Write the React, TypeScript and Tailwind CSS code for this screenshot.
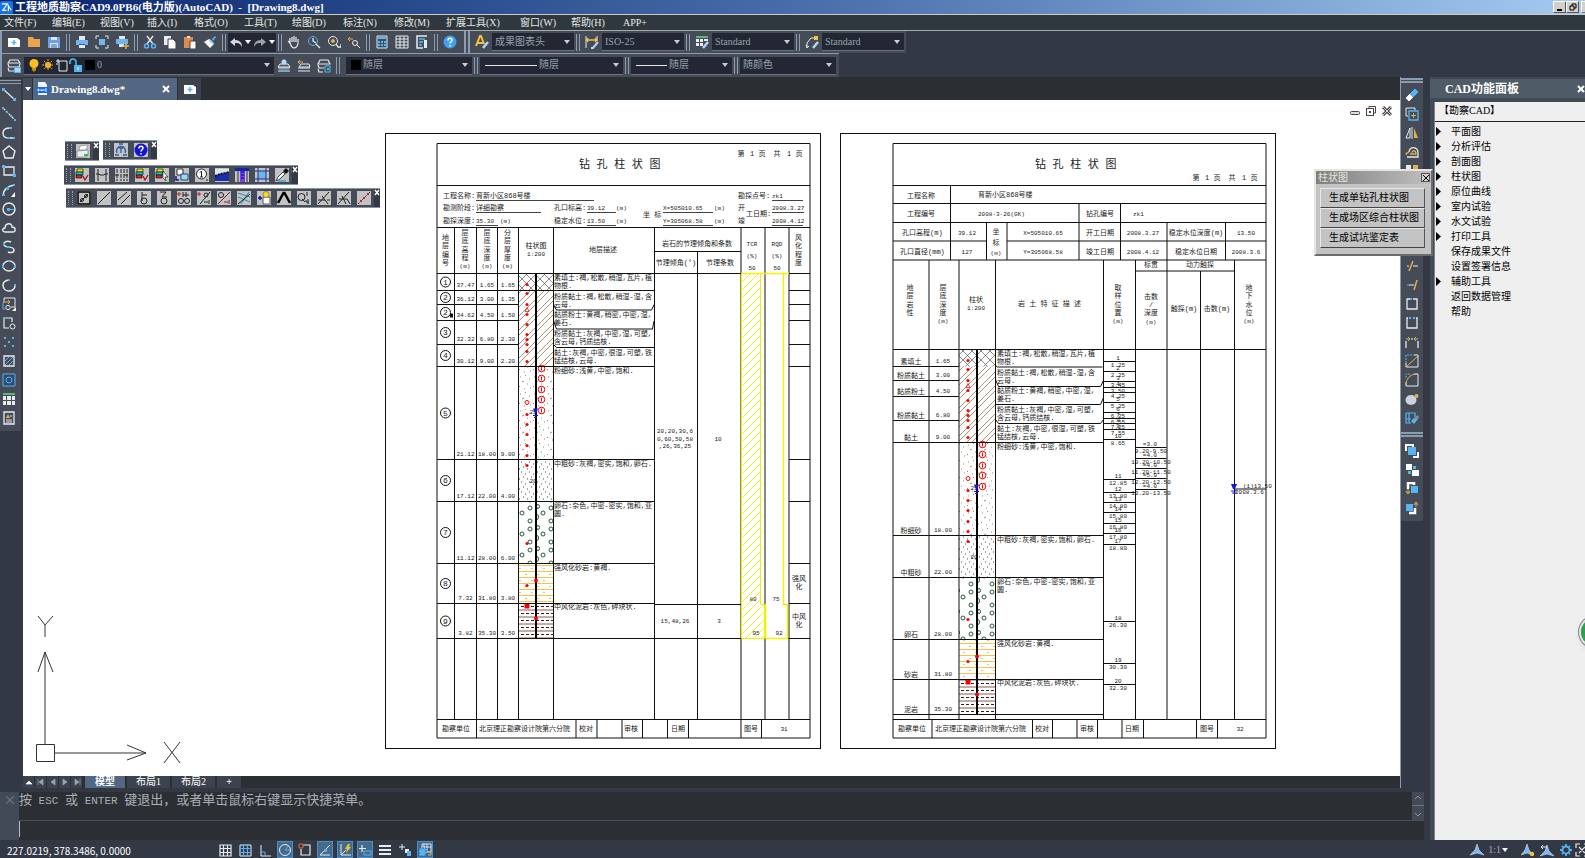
import { ReactNode } from "react";

const W = "#e8ebf0";
const B = "#56b4f2";
const O = "#e3b04b";
const K = "#222222";

/* ---------- icons, all on a 14x14 grid ---------- */

const icons: Record<string, ReactNode> = {
  newFile: (
    <>
      <path d="M1 3h9l3 2v7H1z" fill="#fff" />
      <path d="M7 5v5M4.500 7.500h5" stroke={B} strokeWidth="1.500" />
    </>
  ),
  open: <path d="M1 2h5l1 2h6v8H1z" fill="#e9a64c" />,
  save: (
    <>
      <path d="M1 2h12v11H1z" fill="#6f9ff0" />
      <path d="M4 2h6v3H4zM3 8h8v5H3z" fill="#dbe6fb" />
      <path d="M4 10h6M4 12h6" stroke="#3c5fa8" />
    </>
  ),
  print: (
    <>
      <path d="M4 1h6v4H4zM4 9h6v4H4z" fill="#dbe9f8" />
      <path d="M1 5h12v5H1z" fill="#74b4ea" />
      <path d="M4 9h6v1H4z" fill="#2f5f8f" />
    </>
  ),
  preview: (
    <>
      <path d="M1 4V1h3M10 1h3v3M13 10v3h-3M4 13H1v-3" fill="none" stroke={W} />
      <path d="M4 4h6v6H4z" fill="#74b4ea" />
    </>
  ),
  publish: (
    <>
      <path d="M4 1h6v3H4zM4 8h5v4H4z" fill="#dbe9f8" />
      <path d="M1 4h12v5H1z" fill="#74b4ea" />
      <path d="M11 8v6M8 11h6" stroke={O} strokeWidth="1.500" />
    </>
  ),
  cut: (
    <>
      <path d="M4 1l6 8M10 1L4 9" stroke={W} strokeWidth="1.300" />
      <circle cx="3.500" cy="11" r="2" fill="none" stroke={B} strokeWidth="1.500" />
      <circle cx="10.500" cy="11" r="2" fill="none" stroke={B} strokeWidth="1.500" />
    </>
  ),
  copy: (
    <>
      <path d="M1 1h7v9H1z" fill={W} />
      <path d="M5 4h5l3 3v7H5z" fill="#fff" stroke="#3a414d" />
    </>
  ),
  paste: (
    <>
      <path d="M1 2h9v11H1z" fill="#e08b4c" />
      <path d="M4 1h3v2H4z" fill={W} />
      <path d="M7 6h6v8H7z" fill="#fff" stroke="#3a414d" />
    </>
  ),
  brush: (
    <>
      <path d="M9 4l3-3 1 1-3 4z" fill={B} />
      <path d="M6 4l5 5-4 4-6-6z" fill="#fff" />
      <path d="M7 4l4 4-2 1-3-3z" fill="#9cc9f2" />
    </>
  ),
  undo: <path d="M6 3L1 7l5 4V8c3 0 5 0 7 4 0-4-2-7-7-7z" fill="#d5d9e0" />,
  redo: <path d="M8 3l5 4-5 4V8c-3 0-5 0-7 4 0-4 2-7 7-7z" fill="#9da4b0" />,
  hand: (
    <path
      d="M3 8L1 6M3 8V3M5 7V2M7 7V1M9 7V2M11 8V4M3 8c1 3 2 5 4 5s4-2 4-5"
      fill="none"
      stroke={W}
      strokeWidth="1.200"
    />
  ),
  zoomRt: (
    <>
      <circle cx="6" cy="6" r="4.500" fill="none" stroke={B} />
      <path d="M6 3v3l3 2M9 9l4 4" stroke={W} strokeWidth="1.300" fill="none" />
    </>
  ),
  zoomWin: (
    <>
      <circle cx="6" cy="6" r="4.500" fill="none" stroke={W} />
      <circle cx="6" cy="6" r="2" fill={O} />
      <path d="M9 9l2 3h3v-3" stroke={W} fill="none" strokeWidth="1.300" />
    </>
  ),
  zoomPrev: (
    <>
      <path d="M1 4h5M1 4l2-2M1 4l2 2" stroke={O} fill="none" />
      <circle cx="8" cy="8" r="2.500" fill="none" stroke={W} />
      <path d="M10 10l3 3" stroke={W} />
    </>
  ),
  calc: (
    <>
      <path d="M2 1h10v12H2z" fill="none" stroke={W} />
      <path d="M3 3h8" stroke={B} strokeWidth="2" />
      <path d="M4 6v7M7 6v7M10 6v7" stroke={B} strokeDasharray="2 1" strokeWidth="2" />
    </>
  ),
  table: <path d="M1 1h12v12H1zM5 1v12M9 1v12M1 4h12M1 7h12M1 10h12" fill="none" stroke={W} />,
  props: (
    <>
      <path d="M12 1H2v12h6" fill="none" stroke={W} strokeWidth="1.500" />
      <path d="M4 4h6M4 7h4M4 10h3" stroke={B} strokeWidth="1.500" />
      <path d="M9 5h3v8H9z" fill={W} />
    </>
  ),
  help: (
    <>
      <circle cx="7" cy="7" r="6.500" fill="#3fa2ee" />
      <path d="M5 5.500c0-3 4-3 4-.5C9 6.500 7 7 7 8.500M7 10v1.500" fill="none" stroke="#fff" strokeWidth="1.500" />
    </>
  ),
  textStyle: (
    <>
      <path d="M1 11L5 1h1l3 8M3 8h5" fill="none" stroke="#f3c33d" strokeWidth="2" />
      <path d="M8 13l5-6" stroke="#b8d4f2" strokeWidth="2.500" />
    </>
  ),
  dimStyle: (
    <>
      <path d="M1 1v12M12 1v5" stroke={W} />
      <path d="M2 5h9M3 3L1.500 5 3 7M10 3l2 2-2 2" stroke="#f3c33d" fill="none" strokeWidth="1.300" />
      <path d="M6 13h2l5-6" stroke="#b8d4f2" strokeWidth="2" fill="none" />
    </>
  ),
  tableStyle: (
    <>
      <path d="M1 1h12v2H1z" fill="#57b97c" />
      <path d="M1 4h3v3H1zM5 4h3v3H5zM9 4h4v2H9zM1 8h3v3H1zM5 8h3v3H5z" fill={W} />
      <path d="M8 13l5-6" stroke="#b8d4f2" strokeWidth="2.500" />
    </>
  ),
  leaderStyle: (
    <>
      <path d="M2 12V8l4-5h3M1 10l1 3 2-2" stroke={W} fill="none" />
      <path d="M9 1h4v4H9z" fill="#f3c33d" />
      <path d="M8 13l5-6" stroke="#b8d4f2" strokeWidth="2.500" />
    </>
  ),
  layers: (
    <>
      <path d="M3 1h8l2 3H1zM1 5l1 3h10l1-3M1 9l1 3h5" fill="none" stroke={W} strokeWidth="1.200" />
      <path d="M7 8h7v6H7z" fill={B} />
      <path d="M8 10h5M8 12h5" stroke="#fff" />
    </>
  ),
  layerOn: (
    <>
      <path d="M3 5h8l2 3H1zM1 9h12M1 12h12" fill="#4d5766" stroke={W} />
      <circle cx="7" cy="3" r="2.500" fill="#b9d9f4" />
      <path d="M2 11h10" stroke={B} />
    </>
  ),
  layerPrev: (
    <>
      <path d="M4 5h8l1 3H2zM1 9h12M1 12h12" fill="none" stroke={W} />
      <path d="M1 3h5M3 1L1 3l2 2" stroke={O} fill="none" />
    </>
  ),
  layerState: (
    <>
      <path d="M3 1h8l2 4H1zM1 6l1 3h5M1 10l1 3h4" fill="none" stroke={W} strokeWidth="1.200" />
      <path d="M8 7h5v6H8z" fill="none" stroke={B} />
      <path d="M10 9h2v2h-2z" fill={B} />
    </>
  ),
  bulb: (
    <>
      <circle cx="7" cy="5.500" r="4.500" fill="#fbbf24" />
      <path d="M5 10h4v2l-2 2-2-2z" fill="#c58a17" />
    </>
  ),
  sun: (
    <>
      <circle cx="7" cy="7" r="3" fill="#fbc02d" />
      <path d="M7 1v12M1 7h12M3 3l8 8M11 3l-8 8" stroke="#f5a623" strokeDasharray="2 1" />
    </>
  ),
  viewport: <path d="M4 3h8v10H4zM1 3h3M3 1v4M1 6h2" fill="none" stroke={W} />,
  lock: (
    <>
      <path d="M1 6V4c0-4 6-4 6 0v4" fill="none" stroke={B} strokeWidth="1.600" />
      <path d="M5 7h8v7H5z" fill={B} />
      <path d="M9 9v3" stroke="#fff" />
    </>
  ),
  line: (
    <>
      <path d="M1 1l11 10" stroke={W} strokeWidth="1.200" />
      <path d="M0 0h3v3H0zM11 10h3v3h-3z" fill={B} />
    </>
  ),
  xline: (
    <>
      <path d="M1 1l12 12" stroke={W} strokeWidth="1.200" strokeDasharray="3 1" />
      <path d="M0 0h2v2H0zM4 4h2v2H4zM8 8h2v2H8zM12 12h2v2h-2z" fill={B} />
    </>
  ),
  pline: (
    <>
      <path d="M8 2C3 2 1 4 1 7s2 5 5 5h6" fill="none" stroke={W} strokeWidth="1.400" />
      <path d="M7 1h3v2H7zM5 11h3v2H5zM11 11h2v2h-2z" fill={B} />
    </>
  ),
  polygon: <path d="M7 1l6 5-2 7H3L1 6z" fill="none" stroke={W} strokeWidth="1.400" />,
  rect: (
    <>
      <path d="M2 3h10v8H2z" fill="none" stroke={W} strokeWidth="1.300" />
      <path d="M0 1h3v3H0zM11 10h3v3h-3z" fill={B} />
    </>
  ),
  arc: (
    <>
      <path d="M1 12C1 8 5 3 12 2" fill="none" stroke={W} strokeWidth="1.500" />
      <path d="M0 11h3v2H0zM4 4h3v3H4zM11 1h2v2h-2z" fill={B} />
      <path d="M13 9v5H9z" fill="#fff" />
    </>
  ),
  circle: (
    <>
      <circle cx="7" cy="7" r="6" fill="none" stroke={W} strokeWidth="1.400" />
      <path d="M5 6h3v3H5zM8 7h4v1H8z" fill={B} />
    </>
  ),
  cloud: (
    <path d="M3 11c-3 0-3-4 0-4 0-5 7-6 7-1 4 0 4 5 1 5z" fill="none" stroke={W} strokeWidth="1.400" />
  ),
  spline: (
    <>
      <path d="M9 2C4 0 0 3 3 6c2 2 9 0 9 4 0 3-4 3-6 2" fill="none" stroke={W} strokeWidth="1.500" />
      <path d="M5 6h3v2H5zM1 3h2v2H1z" fill={B} />
    </>
  ),
  ellipse: (
    <>
      <ellipse cx="7" cy="7" rx="6" ry="5" fill="none" stroke={W} strokeWidth="1.400" />
      <path d="M0 6h2v3H0zM12 6h2v3h-2zM6 1h2v2H6z" fill={B} />
    </>
  ),
  earc: (
    <>
      <path d="M7 2C3 2 1 5 1 7c0 4 3 6 6 6s6-2 6-5" fill="none" stroke={W} strokeWidth="1.500" />
      <path d="M6 1h2v2H6zM12 6h2v2h-2z" fill={B} />
    </>
  ),
  insert: (
    <>
      <path d="M2 6V1h11v9H9" fill="none" stroke={W} />
      <path d="M3 5h5M6 3l2 2-2 2" stroke={O} fill="none" />
      <path d="M1 6v6h2" stroke={B} fill="none" />
      <circle cx="6" cy="10.500" r="2.200" stroke={W} fill="none" />
      <path d="M14 10v4h-4z" fill="#fff" />
    </>
  ),
  block: (
    <>
      <path d="M10 6V2H2v10h5" fill="none" stroke={W} strokeWidth="1.200" />
      <circle cx="10.500" cy="10.500" r="2.500" fill="none" stroke={W} />
      <path d="M1 1h2v2H1z" fill={B} />
    </>
  ),
  point: <path d="M2 2h2v2H2zM10 2h2v2h-2zM6 6h2v2H6zM2 10h2v2H2zM10 10h2v2h-2z" fill={B} />,
  hatch: (
    <>
      <path d="M2 2h10v10H2z" fill="none" stroke={W} strokeWidth="1.300" />
      <path d="M3 7l4-4M3 11l8-8M7 11l4-4" stroke={B} />
    </>
  ),
  region: (
    <>
      <path d="M1 1h12v12H1z" fill="#2f4a6b" stroke={B} />
      <circle cx="7" cy="7" r="3" fill="none" stroke={B} />
    </>
  ),
  tbl: (
    <>
      <path d="M1 1h12v2H1z" fill="#57b97c" />
      <path d="M1 4h3v4H1zM5 4h4v4H5zM10 4h3v4h-3zM1 9h3v4H1zM5 9h4v4H5zM10 9h3v4h-3z" fill={W} />
    </>
  ),
  mtext: (
    <>
      <path d="M2 1h10v12H2z" fill="none" stroke={W} strokeWidth="1.300" />
      <path d="M4 7l2-4 2 4z" fill={O} />
      <path d="M8 5h2M4 9h6M4 11h6" stroke={W} />
    </>
  ),
  eraser: (
    <>
      <path d="M1 10l3 3 4-4-3-3z" fill="#fff" stroke="#fff" strokeLinejoin="round" />
      <path d="M5 6l5-5 3 3-5 5z" fill={B} stroke={B} strokeLinejoin="round" />
    </>
  ),
  dup: (
    <>
      <path d="M3 9H1V1h9v2" fill="none" stroke={W} />
      <path d="M4 4h9v9H4z" fill="none" stroke={B} strokeWidth="1.300" />
      <path d="M8.500 6v5M6 8.500h5" stroke={O} />
    </>
  ),
  mirror: (
    <>
      <path d="M5 2v10H1z" fill="none" stroke={W} />
      <path d="M9 2l4 10H9z" fill={O} />
      <path d="M7 1v12" stroke={W} />
    </>
  ),
  offset: (
    <>
      <path d="M2 12h11V8c0-7-9-7-9-1" fill="none" stroke={W} strokeWidth="1.300" />
      <path d="M1 10c0-2 2-3 3-2M5 9h6c0-4-4-4-4-1" stroke={O} fill="none" strokeWidth="1.300" />
    </>
  ),
  array: (
    <>
      <path d="M1 1h5v5H1zM1 8h5v5H1zM8 8h5v5H8z" fill={W} />
      <path d="M8 1h5v5H8z" fill={O} />
    </>
  ),
  move: <path d="M7 1v12M1 7h12" stroke={W} />,
  trim: (
    <>
      <path d="M2 7h2M8 7h5" stroke={W} />
      <path d="M4 12L8 2" stroke={O} strokeWidth="1.500" />
    </>
  ),
  extend: (
    <>
      <path d="M2 7h2" stroke={B} />
      <path d="M4 7h5" stroke={W} />
      <path d="M9 12l3-10" stroke={O} strokeWidth="1.500" />
    </>
  ),
  breakPt: (
    <>
      <path d="M5 2H2v10h10V2H8" fill="none" stroke={W} strokeWidth="1.300" />
      <path d="M5 1h2v2H5z" fill={B} />
    </>
  ),
  breakTwo: (
    <>
      <path d="M3 2H2v10h10V2h-1" fill="none" stroke={W} strokeWidth="1.300" />
      <path d="M4 1h2v2H4zM8 1h2v2H8z" fill={B} />
    </>
  ),
  join: (
    <>
      <path d="M1 13V6M13 13V6" stroke={W} strokeWidth="1.300" />
      <path d="M1 4h4M3 2l2 2-2 2M13 4H9M11 2L9 4l2 2" stroke={O} fill="none" />
      <path d="M6 3h2v2H6z" fill={B} />
    </>
  ),
  chamfer: (
    <>
      <path d="M1 9v4h12V1H9" fill="none" stroke={W} />
      <path d="M1 9V1h8" fill="none" stroke={B} strokeDasharray="2 1" />
      <path d="M2 12L13 2" stroke={O} />
    </>
  ),
  fillet: (
    <>
      <path d="M1 9v4h12V1H9" fill="none" stroke={W} />
      <path d="M1 5V1h5" fill="none" stroke={B} strokeDasharray="2 1" />
      <path d="M1 12C1 6 5 1 12 1" stroke={O} fill="none" />
    </>
  ),
  explode: (
    <>
      <ellipse cx="6" cy="8" rx="5.500" ry="5" fill="#ccd3de" />
      <circle cx="11.500" cy="4" r="2" fill={O} />
    </>
  ),
  blockEdit: (
    <>
      <path d="M1 2h9v4M1 2v10h5M4 2v10M1 8h5" fill="none" stroke={B} strokeWidth="1.200" />
      <path d="M6 10l3-3 4 1-4 5z" fill={B} />
      <path d="M9 7l4-3 1 3-2 1z" fill="#8a909c" />
    </>
  ),
  front: (
    <>
      <path d="M1 7V1h7v2M13 8v5H8" fill="none" stroke="#fff" strokeWidth="2" />
      <path d="M3 3h8v8H3z" fill={B} />
    </>
  ),
  back: (
    <>
      <path d="M8 3h3v3H8zM3 8h3v3H3z" fill={B} />
      <path d="M1 1h6v6H1zM7 7h7v6H7z" fill="#fff" />
    </>
  ),
  above: (
    <>
      <path d="M3 7V1h6v2" fill="none" stroke="#fff" strokeWidth="2.500" />
      <path d="M6 4h7v7H6z" fill={B} />
      <path d="M1 9l2 3 2-3M3 7v5" stroke={O} fill="none" />
    </>
  ),
  under: (
    <>
      <path d="M10 7v5H4" fill="none" stroke="#fff" strokeWidth="2.500" />
      <path d="M1 3h7v7H1z" fill={B} />
      <path d="M9 4l2-3 2 3M11 1v5" stroke={O} fill="none" />
    </>
  ),
  // status bar
  grid: <path d="M2 2h11v11H2zM5.500 2v11M9.500 2v11M2 5.500h11M2 9.500h11" fill="none" stroke={W} strokeWidth="1.200" />,
  snap: (
    <>
      <path d="M2 2h11v11H2z" fill="none" stroke={W} />
      <path d="M5.500 1v12M9.500 1v12M1 5.500h12M1 9.500h12" stroke={B} strokeWidth="1.200" />
    </>
  ),
  ortho: (
    <>
      <path d="M3 2v11h10" fill="none" stroke={W} />
      <path d="M3 9h4v4" fill="none" stroke={B} />
    </>
  ),
  polar: (
    <>
      <circle cx="7" cy="7" r="5.500" fill="none" stroke={W} />
      <path d="M7 7h5M7 7l3-4" stroke={B} />
    </>
  ),
  osnap: (
    <>
      <path d="M5 2h7v10H3V6" fill="none" stroke={W} strokeWidth="1.200" />
      <path d="M1 1h4v4H1z" fill="none" stroke="#d96c3a" />
    </>
  ),
  track: (
    <>
      <path d="M2 12L12 2M2 12h10" stroke={W} />
      <path d="M6 6h3v3H6z" fill={B} />
    </>
  ),
  ducs: (
    <>
      <path d="M3 1v11h10M3 12l5-5" stroke={W} fill="none" />
      <path d="M10 1L7 6h2L8 10l5-6h-2l1-3z" fill="#f3c33d" />
    </>
  ),
  dyn: (
    <>
      <path d="M4 2v7M1 5.500h7" stroke={W} strokeWidth="1.200" />
      <path d="M6 8h7v4H6z" fill="none" stroke={B} />
    </>
  ),
  lwt: <path d="M1 3h12M1 7h12M1 11h12" stroke={W} strokeWidth="2" />,
  cycle: (
    <>
      <path d="M4 1v6M1 4h6" stroke={W} />
      <path d="M7 6h4v4H7z" fill={W} />
      <path d="M9 8h4v5H9z" fill={B} />
    </>
  ),
  quick: (
    <>
      <path d="M4 1h9v8H4z" fill="#2f5f8f" stroke={W} />
      <path d="M6 1v8M9 1v8M4 4h9" stroke={W} />
      <path d="M1 5h7v8H1z" fill={B} stroke="#2f5f8f" strokeDasharray="2 1" />
      <path d="M13 8v4h-3" stroke={O} fill="none" />
    </>
  ),
  scale: <path d="M7 1l2 6 5 5-7-2-7 2 5-5z" fill="#7fb6f0" stroke="#c7dcf6" strokeWidth=".6" />,
  scaleDot: (
    <>
      <path d="M6 1l2 6 4 5-6-2-6 2 4-5z" fill="#7fb6f0" stroke="#c7dcf6" strokeWidth=".6" />
      <circle cx="11" cy="11" r="2.200" fill="#f3c33d" />
    </>
  ),
  scaleAuto: (
    <>
      <path d="M7 2l2 6 5 5-7-2-7 2 5-5z" fill="#7fb6f0" stroke="#c7dcf6" strokeWidth=".6" />
      <path d="M1 4h6M3 2L1 4l2 2" stroke={W} fill="none" />
    </>
  ),
  gear: (
    <>
      <circle cx="7" cy="7" r="3.500" fill="none" stroke={B} strokeWidth="1.800" />
      <path d="M7 1v2M7 11v2M1 7h2M11 7h2M3 3l1 1M10 10l1 1M11 3l-1 1M4 10l-1 1" stroke={B} strokeWidth="1.800" />
    </>
  ),
  full: <path d="M1 5V1h4M9 1h4v4M13 9v4H9M5 13H1V9M4 4l6 6M10 4l-6 6" fill="none" stroke={W} strokeWidth="1.200" />,
  // floating palettes
  printer: (
    <>
      <path d="M4 2l8-1-2 5H3z" fill="#fff" stroke="#777" strokeWidth=".6" />
      <path d="M1 7l11-1v5l-2 2H1z" fill="#e9eef2" stroke="#667" strokeWidth=".6" />
      <path d="M8 10h4v2H8z" fill="#2fc04a" />
    </>
  ),
  timer: (
    <>
      <path d="M3 10a4.500 4.500 0 1 1 8 0" fill="none" stroke="#2f5fa8" strokeWidth="1.400" />
      <path d="M5 5h4M7 5v5M5 1h4M1 12h4M9 12h4" stroke="#2f5fa8" strokeWidth="1.300" />
    </>
  ),
  about: (
    <>
      <circle cx="7" cy="7" r="6.500" fill="#1414d8" />
      <path d="M5 5.500c0-3 4-3 4-.5C9 6.500 7 7 7 8.500M7 10v1.500" fill="none" stroke="#fff" strokeWidth="1.500" />
    </>
  ),
  flag: (
    <>
      <path d="M2 1h6v3H2z" fill="#ffe100" stroke="#000" strokeWidth=".6" />
      <path d="M1 4h7v3H1z" fill="#0cc" stroke="#000" strokeWidth=".6" />
      <path d="M1 7h6v3H1z" fill="#d22" stroke="#000" strokeWidth=".6" />
      <path d="M8 8l2 4 3-5" fill="none" stroke="#a01024" strokeWidth="1.300" />
    </>
  ),
  flagCur: (
    <>
      <path d="M2 1h6v3H2z" fill="#ffe100" stroke="#000" strokeWidth=".6" />
      <path d="M1 4h7v3H1z" fill="#0cc" stroke="#000" strokeWidth=".6" />
      <path d="M1 7h6v3H1z" fill="#d22" stroke="#000" strokeWidth=".6" />
      <path d="M8 3l5 6-3 0 1 4-3-3z" fill="#fff" stroke="#000" strokeWidth=".6" />
    </>
  ),
  joinH: <path d="M3 1v12M11 1v12M1 6h3l1 1h4l1-1h3" fill="none" stroke={K} />,
  joinHH: <path d="M2 1v12M6 1v12M9 1v12M12 1v12M0 7h5M9 7h5" fill="none" stroke={K} strokeDasharray="4 1" />,
  docs: (
    <>
      <path d="M2 1h6v6H2z" fill="#fff" stroke="#000" strokeWidth=".8" />
      <path d="M6 6h7v6H6z" fill="#9fdbe6" stroke="#1f3f8f" />
      <path d="M1 8v4h3" stroke="#11a" fill="none" strokeWidth="1.500" />
    </>
  ),
  one: (
    <>
      <circle cx="6.500" cy="6" r="5" fill="#fff" stroke={K} />
      <path d="M5 4.500L6.500 3v6M5 9h3M11 12h2" stroke={K} fill="none" />
    </>
  ),
  section: (
    <>
      <path d="M0 1h14v12H0z" fill="#dfe6ee" />
      <path d="M0 8l5-2 5-1 4-1v9H0z" fill="#1a2fb0" />
      <path d="M0 8l5-2 5-1 4-1" stroke="#111" strokeWidth="2" fill="none" strokeDasharray="2 1" />
    </>
  ),
  column: (
    <>
      <path d="M0 0h14v3H0z" fill="#1525a8" />
      <path d="M5 3h5v11H5z" fill="#7d3cf0" />
      <path d="M6 4h3M6 7h3M6 10h3" stroke="#1525a8" strokeWidth="1.500" />
      <path d="M3 3v11M12 3v11" stroke="#333" />
    </>
  ),
  crop: (
    <>
      <path d="M3 3h8v8H3z" fill="#6db6ea" />
      <path d="M3 0v14M0 11h14M0 3h14M11 0v14" stroke="#1d2f8f" />
    </>
  ),
  dropper: (
    <>
      <path d="M1 13l2-4 5-5 2 2-5 5z" fill="#fff" stroke="#222" strokeWidth=".8" />
      <path d="M8 3l3-3 3 3-3 3z" fill="#111" />
      <path d="M3 13h8" stroke="#2aa9e6" strokeWidth="1.500" />
    </>
  ),
  p1: (
    <>
      <path d="M1 13V1h12v12z" fill="none" stroke="#000" strokeWidth="1.500" />
      <path d="M3 11l8-8" stroke={K} />
      <circle cx="5" cy="9" r="1.500" fill="none" stroke={K} />
      <circle cx="9" cy="5" r="1.500" fill="none" stroke={K} />
    </>
  ),
  p2: <path d="M1 13L13 1" stroke={K} />,
  p3: <path d="M1 9l9-8M4 13l9-9" stroke={K} />,
  p4: (
    <>
      <circle cx="7" cy="10" r="3" fill="none" stroke={K} />
      <path d="M5 1v9M5 4h5" stroke={K} />
    </>
  ),
  p5: (
    <>
      <circle cx="7" cy="10" r="3" fill="none" stroke={K} />
      <path d="M3 1h6L5 6h5" stroke={K} fill="none" />
    </>
  ),
  p6: (
    <>
      <circle cx="4" cy="10" r="2.500" fill="none" stroke={K} />
      <circle cx="10" cy="10" r="2.500" fill="none" stroke={K} />
      <path d="M6 1v5M9 1v5M6 4h6" stroke={K} />
      <path d="M0 3h4M2 1v4" stroke="#c02030" />
    </>
  ),
  p7: (
    <>
      <path d="M3 13L13 1M7 11h4M12 9v4" stroke={K} />
      <circle cx="9" cy="4" r="2" fill="none" stroke={K} />
      <path d="M0 3h4M2 1v4" stroke="#c02030" />
    </>
  ),
  p8: (
    <>
      <path d="M1 13L13 1M7 11h4M12 9v4" stroke="#822" />
      <circle cx="4" cy="4" r="2.500" fill="none" stroke={K} />
    </>
  ),
  p9: (
    <>
      <path d="M1 2l12 4M1 6l12 5M4 13l8-12" stroke="#2a8fc0" />
      <path d="M1 13L13 3" stroke={K} />
    </>
  ),
  p10: (
    <>
      <path d="M1 7h4M3 5v4" stroke="#11a" strokeWidth="1.500" />
      <path d="M6 6h7v7H6z" fill="#fff" stroke="#555" />
      <circle cx="9" cy="3.500" r="3" fill="#ffe100" stroke="#555" strokeWidth=".6" />
    </>
  ),
  p11: <path d="M7 1L1 12M7 1l6 11" stroke="#000" strokeWidth="2.500" fill="none" />,
  p12: (
    <>
      <circle cx="4.500" cy="6" r="3.500" fill="none" stroke={K} />
      <path d="M5 8l3 3M10 1v4M9 9v2h3M11 8v5" stroke={K} fill="none" />
    </>
  ),
  p13: <path d="M1 13L12 1M1 9h7M5 5l6 8M10 9h3" stroke={K} />,
  p14: <path d="M1 13L12 1M2 8h8l3 5M5 5l4 8" stroke={K} fill="none" />,
  p15: (
    <>
      <path d="M1 13L13 1" stroke={K} strokeDasharray="2 1" />
      <path d="M3 9h2v2H3zM6 6h2v2H6zM10 2h2v2h-2z" fill="#c02030" />
    </>
  ),
};

const Icon = ({ name }: { name: string }) => (
  <svg viewBox="0 0 14 14" className="size-3.5 shrink-0">
    {icons[name]}
  </svg>
);

const ToolButton = ({ name }: { name: string }) => (
  <button aria-label={name} className="flex h-full w-5 shrink-0 items-center justify-center">
    <Icon name={name} />
  </button>
);

const Grip = () => <span className="mx-[2px] h-[17px] w-1 shrink-0 self-center border-x border-[#8b9bb0]" />;

const Down = ({ color = "#c9cdd4" }: { color?: string }) => (
  <svg viewBox="0 0 6 4" className="h-1 w-1.5 shrink-0">
    <path d="M0 0h6L3 4z" fill={color} />
  </svg>
);

interface ComboProps {
  label: string;
  value: string;
  className: string;
  children?: ReactNode;
}

const Combo = ({ label, value, className, children }: ComboProps) => (
  <div className={`flex h-[18px] shrink-0 items-center self-center border-b border-[#6b7280] bg-[#222733] pr-1 pl-[3px] ${className}`}>
    {children}
    <select aria-label={label} className="min-w-0 flex-1 appearance-none bg-transparent text-[10px] leading-4 text-[#9aa1ad] outline-none">
      <option>{value}</option>
    </select>
    <Down />
  </div>
);

const menus = [
  ["文件(F)", "w-12"],
  ["编辑(E)", "w-12"],
  ["视图(V)", "w-[47px]"],
  ["插入(I)", "w-[47px]"],
  ["格式(O)", "w-[50px]"],
  ["工具(T)", "w-12"],
  ["绘图(D)", "w-[51px]"],
  ["标注(N)", "w-[51px]"],
  ["修改(M)", "w-[52px]"],
  ["扩展工具(X)", "w-[74px]"],
  ["窗口(W)", "w-[51px]"],
  ["帮助(H)", "w-[52px]"],
  ["APP+", "w-[52px]"],
];

const drawTools = [
  "line", "xline", "pline", "polygon", "rect", "arc", "circle", "cloud", "spline",
  "ellipse", "earc", "insert", "block", "point", "hatch", "region", "tbl", "mtext",
];

const modifyTools = [
  "eraser", "dup", "mirror", "offset", "array", "move", "move", "move", "move",
  "trim", "extend", "breakPt", "breakTwo", "join", "chamfer", "fillet", "explode", "blockEdit",
];

const panelItems: [string, boolean][] = [
  ["平面图", true],
  ["分析评估", true],
  ["剖面图", true],
  ["柱状图", true],
  ["原位曲线", true],
  ["室内试验", true],
  ["水文试验", true],
  ["打印工具", true],
  ["保存成果文件", false],
  ["设置签署信息", false],
  ["辅助工具", true],
  ["返回数据管理", false],
  ["帮助", false],
];

/* ---------- borehole log drawings ---------- */

interface TProps {
  x: number;
  y: number;
  children: ReactNode;
  mid?: boolean;
  size?: number;
}

const T = ({ x, y, children, mid, size = 7 }: TProps) => (
  <text x={x} y={y} fontSize={size} fill="#1a1a1a" textAnchor={mid ? "middle" : "start"} dominantBaseline="central">
    {children}
  </text>
);

// label written one glyph per row
const V = ({ x, y, s, unit }: { x: number; y: number; s: string; unit?: boolean }) => (
  <>
    {[...s.split(""), ...(unit ? ["(m)"] : [])].map((c, i) => (
      <T key={i} x={x} y={y + i * 8.3} mid size={c === "(m)" ? 6 : 7}>
        {c}
      </T>
    ))}
  </>
);

const PageNo = ({ x, y }: { x: number; y: number }) => (
  <>
    {[["第", 0], ["1", 11], ["页", 21], ["共", 36], ["1", 48], ["页", 58]].map(([c, dx], i) => (
      <T key={i} x={x + Number(dx)} y={y} mid>
        {c}
      </T>
    ))}
  </>
);

// top and bottom are offsets from the ground line
const layers = [
  { no: "1", name: "素填土", level: "37.47", depth: "1.65", thick: "1.65", top: 0, bottom: 17, fill: "cross" },
  { no: "2", name: "粉质黏土", level: "36.12", depth: "3.00", thick: "1.35", top: 17, bottom: 31, fill: "slash" },
  { no: "2", name: "黏质粉土", level: "34.62", depth: "4.50", thick: "1.50", top: 31, bottom: 47, fill: "slash" },
  { no: "3", name: "粉质黏土", level: "32.32", depth: "6.80", thick: "2.30", top: 47, bottom: 71, fill: "slash" },
  { no: "4", name: "黏土", level: "30.12", depth: "9.00", thick: "2.20", top: 71, bottom: 93, fill: "slash" },
  { no: "5", name: "粉细砂", level: "21.12", depth: "18.00", thick: "9.00", top: 93, bottom: 186, fill: "silt" },
  { no: "6", name: "中粗砂", level: "17.12", depth: "22.00", thick: "4.00", top: 186, bottom: 228, fill: "sand" },
  { no: "7", name: "卵石", level: "11.12", depth: "28.00", thick: "6.00", top: 228, bottom: 290, fill: "gravel" },
  { no: "8", name: "砂岩", level: "7.32", depth: "31.80", thick: "3.80", top: 290, bottom: 330, fill: "stone" },
  { no: "9", name: "泥岩", level: "3.82", depth: "35.30", thick: "3.50", top: 330, bottom: 365, fill: "mud" },
];

const descriptions: [number, string][] = [
  [4, "素填土:褐,松散,稍湿,瓦片,植"],
  [12, "物根."],
  [23, "粉质黏土:褐,松散,稍湿-湿,含"],
  [31, "云母."],
  [41, "黏质粉土:黄褐,稍密,中密,湿,"],
  [49, "姜石."],
  [60, "粉质黏土:灰褐,中密,湿,可塑,"],
  [68, "含云母,钙质结核."],
  [79, "黏土:灰褐,中密,很湿,可塑,铁"],
  [87, "锰结核,云母."],
  [97, "粉细砂:浅黄,中密,饱和."],
  [190, "中粗砂:灰褐,密实,饱和,卵石."],
  [232, "卵石:杂色,中密-密实,饱和,亚"],
  [240, "圆."],
  [294, "强风化砂岩:黄褐."],
  [333, "中风化泥岩:灰色,碎块状."],
];

const Patterns = ({ id }: { id: string }) => (
  <defs>
    <pattern id={`${id}-cross`} width="9" height="9" patternUnits="userSpaceOnUse">
      <path d="M0 0l9 9M9 0L0 9" stroke="#555" strokeWidth=".7" />
    </pattern>
    <pattern id={`${id}-slash`} width="14" height="14" patternUnits="userSpaceOnUse">
      <path d="M0 14L14 0M0 9L9 0M9 14l5-5" stroke="#85683a" strokeWidth=".7" />
    </pattern>
    <pattern id={`${id}-silt`} width="14" height="17" patternUnits="userSpaceOnUse">
      <path d="M2 3h1M7 1l1 1M11 5h1M4 8l2-1M9 10h1M1 13l1-1M12 14h1M6 15h1" stroke="#8a8760" strokeWidth=".9" />
    </pattern>
    <pattern id={`${id}-sand`} width="8" height="10" patternUnits="userSpaceOnUse">
      <path d="M1 2h1M5 4h1M3 7h1M7 9h1" stroke="#444" />
    </pattern>
    <pattern id={`${id}-gravel`} width="21" height="21" patternUnits="userSpaceOnUse">
      <g fill="none" stroke="#1f5b3c">
        <circle cx="5" cy="4" r="2" />
        <ellipse cx="13" cy="2.500" rx="1.500" ry="2" />
        <ellipse cx="12" cy="13" rx="1.500" ry="2.500" />
        <circle cx="5" cy="17" r="2" />
        <circle cx="18" cy="9" r="2" />
      </g>
    </pattern>
    <pattern id={`${id}-stone`} width="12" height="12" patternUnits="userSpaceOnUse">
      <path d="M0 1.500h12M0 7.500h12" stroke="#f6c44e" />
      <path d="M3 4.500h2M9 10.500h2" stroke="#f6c44e" />
    </pattern>
    <pattern id={`${id}-mud`} width="10" height="7" patternUnits="userSpaceOnUse">
      <path d="M0 1h10" stroke="#8a5a52" />
      <path d="M1 4.500h3M6 4.500h3" stroke="#3d1a14" />
    </pattern>
    <pattern id={`${id}-core`} width="8" height="8" patternUnits="userSpaceOnUse">
      <path d="M0 8L8 0M-2 2l4-4M6 10l4-4" stroke="#f5f000" strokeWidth=".9" />
    </pattern>
  </defs>
);

const dotsY = [11, 20, 31, 41, 51, 61, 66, 71, 78, 88, 141, 151, 161, 172, 182, 192, 270, 312];

const SoilStrip = ({ id, left, right, cx, top }: { id: string; left: number; right: number; cx: number; top: number }) => (
  <g>
    {layers.map((l, i) => (
      <rect key={i} x={left} y={top + l.top} width={right - left} height={l.bottom - l.top} fill={`url(#${id}-${l.fill})`} />
    ))}
    <path d={`M${cx} ${top}v365`} stroke="#000" strokeWidth="2" />
    {dotsY.map((y) => (
      <circle key={y} cx={cx - 9} cy={top + y} r="1.600" fill="#f00" />
    ))}
    <g fill="none" stroke="#f00">
      <path d={`M${cx - 11} ${top + 38}l2-4 2 4z`} strokeWidth=".7" />
      <circle cx={cx - 9} cy={top + 129} r="2" fill="#fff" />
      {[95, 105, 116, 126, 137].map((y) => (
        <g key={y}>
          <circle cx={cx + 5.500} cy={top + y} r="3.300" fill="#fff" />
          <path d={`M${cx + 5.500} ${top + y - 2}v4`} />
        </g>
      ))}
    </g>
    <path d={`M${cx - 9 - 2.5} ${top + 330}h5v5h-5z`} fill="#f00" />
    <circle cx={cx} cy={top + 307} r="2" fill="#f00" />
    <circle cx={cx} cy={top + 345} r="2" fill="#f00" />
    <T x={cx - 3} y={top + 139} mid size={6}>25</T>
    <T x={cx - 3} y={top + 208} mid size={6}>20</T>
    <path d={`M${cx - 3} ${top + 135}h5l-2 5h-1z`} fill="#1414e0" />
    <path d={`M${cx - 3} ${top + 142}h5M${cx - 2} ${top + 144}h3`} stroke="#1414e0" />
  </g>
);

const Descriptions = ({ x, top }: { x: number; top: number }) => (
  <>
    {descriptions.map(([dy, s]) => (
      <T key={dy} x={x} y={top + dy}>
        {s}
      </T>
    ))}
  </>
);

const LogSheetA = () => {
  const top = 273.5;
  return (
    <svg
      viewBox="384 132 438 618"
      className="absolute top-8 left-[361px] h-[618px] w-[438px] font-['Liberation_Mono','Noto_Sans_CJK_SC',monospace]"
    >
      <Patterns id="a" />
      <rect x="385.500" y="133.500" width="435" height="615" fill="#fff" stroke="#111" />
      <SoilStrip id="a" left={518.5} right={553.5} cx={536} top={top} />
      <g fill="none" stroke="#111">
        <path d="M437 143.500H810V738H437z" />
        <path d="M437 185.500H810M437 227.500H810M654.500 251.500H741M437 273.500H741M789 273.500h21M437 719.500H810M437 638.500H810M654.500 604.500H741" />
        <path d="M454.500 227.500v492M476.500 227.500V738M497.500 227.500v492M518.500 227.500v492M553.500 227.500v492M654.500 227.500v492M697.500 251.500v468M741 227.500V738M765 227.500v492M789 227.500v492" />
        <path d="M576 719.500V738M597 719.500V738M622 719.500V738M642.500 719.500V738M667.500 719.500V738M688.500 719.500V738M761.500 719.500V738" />
        {layers.map((l, i) => (
          <path key={i} d={`M437 ${top + l.bottom}H518M789 ${top + l.bottom}h21`} />
        ))}
        {[17, 93, 186, 228, 290, 330].map((y) => (
          <path key={y} d={`M518 ${top + y}H654`} />
        ))}
        <path d="M553.500 304.500l3 5.500h95l3-6M553.500 320.500l3 8.500h96l1.500-8M553.500 344.500l3 3h98" />
        <path d="M476 200.500h118M772 200.500h31M476 212.500h65M587 212.500h29M663 212.500h50M772 212.500h32M476 225.500h22M587 225.500h29M663 225.500h50M772 225.500h31" strokeWidth=".8" />
      </g>
      <path d="M741.500 273.500h19V604.500h4v34h-23z" fill="url(#a-core)" stroke="#f5f000" />
      <path d="M741 273.500h48M765.500 638.500h22v-34h-4v-331M765.500 604.500v34" fill="none" stroke="#f5f000" strokeWidth="1.500" />

      <T x={579} y={165} size={11}>钻 孔 柱 状 图</T>
      <PageNo x={741} y={154} />
      <T x={443} y={196}>工程名称:</T>
      <T x={476} y={196}>育新小区868号楼</T>
      <T x={738} y={196}>勘探点号:</T>
      <T x={772} y={196} size={6}>zk1</T>
      <T x={443} y={208}>勘测阶段:</T>
      <T x={476} y={208}>详细勘察</T>
      <T x={554} y={208}>孔口标高:</T>
      <T x={587} y={208} size={6}>39.12</T>
      <T x={616} y={208} size={6}>(m)</T>
      <T x={643} y={215}>坐 标</T>
      <T x={663} y={208} size={6}>X=505010.65</T>
      <T x={714} y={208} size={6}>(m)</T>
      <T x={738} y={208}>开</T>
      <T x={746} y={214}>工日期:</T>
      <T x={772} y={208} size={6}>2008.3.27</T>
      <T x={443} y={221}>勘探深度:</T>
      <T x={476} y={221} size={6}>35.30</T>
      <T x={500} y={221} size={6}>(m)</T>
      <T x={554} y={221}>稳定水位:</T>
      <T x={587} y={221} size={6}>13.50</T>
      <T x={616} y={221} size={6}>(m)</T>
      <T x={663} y={221} size={6}>Y=305068.58</T>
      <T x={714} y={221} size={6}>(m)</T>
      <T x={738} y={221}>竣</T>
      <T x={772} y={221} size={6}>2008.4.12</T>

      <V x={445.5} y={238} s="地层编号" />
      <V x={465} y={233} s="层底高程" unit />
      <V x={487} y={233} s="层底深度" unit />
      <V x={507.5} y={233} s="分层厚度" unit />
      <T x={536} y={246} mid>柱状图</T>
      <T x={536} y={254} mid size={6}>1:200</T>
      <T x={603} y={250} mid>地层描述</T>
      <T x={697} y={244} mid>岩石的节理倾角和条数</T>
      <T x={676} y={263} mid>节理倾角(°)</T>
      <T x={720} y={263} mid>节理条数</T>
      <T x={752} y={244} mid size={6}>TCR</T>
      <T x={752} y={256} mid size={6}>(%)</T>
      <T x={752} y={268} mid size={6}>50</T>
      <T x={777} y={244} mid size={6}>RQD</T>
      <T x={777} y={256} mid size={6}>(%)</T>
      <T x={777} y={268} mid size={6}>50</T>
      <V x={798.5} y={238} s="风化程度" />

      {layers.map((l, i) => {
        const cy = top + (l.top + l.bottom) / 2;
        const y = top + l.bottom - 5;
        return (
          <g key={i}>
            <circle cx="445.500" cy={cy} r="5" fill="none" stroke="#111" />
            <T x={445.5} y={cy} mid size={8}>{l.no}</T>
            {i === 2 && <rect x="450" y={cy + 1} width="3" height="4" fill="#111" />}
            <T x={465.5} y={y} mid size={6}>{l.level}</T>
            <T x={487} y={y} mid size={6}>{l.depth}</T>
            <T x={508} y={y} mid size={6}>{l.thick}</T>
          </g>
        );
      })}
      <Descriptions x={554} top={top} />
      <T x={675} y={431} mid size={6}>20,20,30,6</T>
      <T x={675} y={439} mid size={6}>0,60,50,58</T>
      <T x={675} y={446} mid size={6}>,26,36,25</T>
      <T x={718} y={439} mid size={6}>10</T>
      <T x={675} y={621} mid size={6}>15,48,26</T>
      <T x={719} y={621} mid size={6}>3</T>
      <T x={753} y={599} mid size={6}>80</T>
      <T x={776} y={599} mid size={6}>75</T>
      <T x={756} y={633} mid size={6}>95</T>
      <T x={779} y={633} mid size={6}>92</T>
      <T x={799} y={579} mid>强风</T>
      <T x={799} y={587} mid>化</T>
      <T x={799} y={617} mid>中风</T>
      <T x={799} y={625} mid>化</T>

      <T x={442} y={729}>勘察单位</T>
      <T x={479} y={729}>北京理正勘察设计院第六分院</T>
      <T x={579} y={729}>校对</T>
      <T x={624} y={729}>审核</T>
      <T x={671} y={729}>日期</T>
      <T x={744} y={729}>图号</T>
      <T x={784} y={729} mid size={6}>31</T>
    </svg>
  );
};

const samples: [number, string, string][] = [
  [361, "1", "1.25"], [371, "2", "2.25"], [381, "3", "3.45"], [387, "4", "3.50"], [392, "", "4.25"],
  [402, "5", "5.25"], [412, "6", "6.25"], [418, "7", "6.55"], [423, "8", "7.25"], [429, "9", "7.55"],
  [439, "10", "8.65"], [479, "11", "12.85"], [492, "12", "13.80"], [502, "13", "14.80"], [512, "14", "15.80"],
  [523, "15", "16.80"], [533, "16", "17.80"], [544, "17", "18.80"], [621, "18", "26.30"], [663, "19", "30.30"],
  [684, "20", "32.30"],
];

const blows: [number, string, string][] = [
  [447, "=3.0", "9.20-9.50"],
  [458, "=4.0", "10.20-10.50"],
  [468, "=4.0", "11.20-11.50"],
  [478, "=5.0", "12.20-12.50"],
  [489, "=4.0", "13.20-13.50"],
];

const LogSheetB = () => {
  const top = 349.5;
  return (
    <svg
      viewBox="839 132 438 618"
      className="absolute top-8 left-[816px] h-[618px] w-[438px] font-['Liberation_Mono','Noto_Sans_CJK_SC',monospace]"
    >
      <Patterns id="b" />
      <rect x="840.500" y="133.500" width="435" height="615" fill="#fff" stroke="#111" />
      <SoilStrip id="b" left={959} right={995.5} cx={977} top={top} />
      <g fill="none" stroke="#111">
        <path d="M893 143.500h373V738H893z" />
        <path d="M893 185.500h373M893 203.500h373M893 222.500h373M893 241h93.500M1007 241h259M893 260h373M1135.500 271h99M893 349.500h373M893 719.500h373" />
        <path d="M950.500 185.500V260M1079 203.500V260M1120.500 203.500V260M986.500 222.500V260M1007 222.500V260M1167 222.500V260M1225.500 222.500V260" />
        <path d="M929 260v459M959 260v459M995.500 260v459M1103.500 260v459M1135.500 260v459M1167 260v459M1200.500 271v448M1234.500 260v459" />
        <path d="M932 719.500V738M1032.500 719.500V738M1052.500 719.500V738M1077 719.500V738M1097.500 719.500V738M1122 719.500V738M1143.500 719.500V738M1196.500 719.500V738M1217.500 719.500V738" />
        {layers.map((l, i) => (
          <path key={i} d={`M893 ${top + l.bottom}h66`} />
        ))}
        {[93, 186, 228, 290, 330, 365].map((y) => (
          <path key={y} d={`M959 ${top + y}h144.500`} />
        ))}
        <path d="M995.500 365.500l2 1.500h105M995.500 379.500l3 7h102l3-6M995.500 395.500v9h105l3-7M995.500 419.500l3 4h102l3-4" />
        {samples.map(([y]) => (
          <path key={y} d={`M1103.500 ${y + 0.5}h32`} />
        ))}
        {blows.map(([y]) => (
          <path key={y} d={`M1135.500 ${y + 0.5}h31`} />
        ))}
        <path d="M1234.500 489h31.500" />
      </g>
      <path d="M1231 484h6l-2 5h-2z" fill="#1414e0" />
      <path d="M1231 491h6M1232 493h4" stroke="#1414e0" />

      <T x={1035} y={165} size={11}>钻 孔 柱 状 图</T>
      <PageNo x={1196} y={178} />
      <T x={921} y={196} mid>工程名称</T>
      <T x={978} y={195}>育新小区868号楼</T>
      <T x={921} y={214} mid>工程编号</T>
      <T x={978} y={214} size={6}>2008-3-26(GK)</T>
      <T x={1086} y={214}>钻孔编号</T>
      <T x={1133} y={214} size={6}>zk1</T>
      <T x={902} y={233}>孔口高程(m)</T>
      <T x={967} y={233} mid size={6}>39.12</T>
      <T x={996} y={232} mid>坐</T>
      <T x={996} y={243} mid>标</T>
      <T x={996} y={253} mid size={6}>(m)</T>
      <T x={1043} y={233} mid size={6}>X=505010.65</T>
      <T x={1086} y={233}>开工日期</T>
      <T x={1143} y={233} mid size={6}>2008.3.27</T>
      <T x={1196} y={233} mid>稳定水位深度(m)</T>
      <T x={1246} y={233} mid size={6}>13.50</T>
      <T x={900} y={252}>孔口直径(mm)</T>
      <T x={967} y={252} mid size={6}>127</T>
      <T x={1043} y={252} mid size={6}>Y=305068.58</T>
      <T x={1086} y={252}>竣工日期</T>
      <T x={1143} y={252} mid size={6}>2008.4.12</T>
      <T x={1196} y={252} mid>稳定水位日期</T>
      <T x={1246} y={252} mid size={6}>2008.3.6</T>

      <V x={910} y={288} s="地层岩性" />
      <V x={943} y={288} s="层底深度" unit />
      <T x={976} y={300} mid>柱状</T>
      <T x={976} y={308} mid size={6}>1:200</T>
      <T x={1018} y={304}>岩 土 特 征 描 述</T>
      <V x={1118} y={288} s="取样位置" unit />
      <T x={1151} y={265} mid>标贯</T>
      <T x={1151} y={297} mid>击数</T>
      <T x={1151} y={305} mid>/</T>
      <T x={1151} y={313} mid>深度</T>
      <T x={1151} y={322} mid size={6}>(m)</T>
      <T x={1200} y={265} mid>动力触探</T>
      <T x={1184} y={309} mid>触探(m)</T>
      <T x={1217} y={309} mid>击数(m)</T>
      <V x={1249} y={288} s="地下水位" unit />

      {layers.map((l, i) => (
        <g key={i}>
          <T x={911} y={top + l.bottom - 5} mid>{l.name}</T>
          <T x={943} y={top + l.bottom - 5} mid size={6}>{l.depth}</T>
        </g>
      ))}
      <Descriptions x={997} top={top} />
      {samples.map(([y, no, depth]) => (
        <g key={y}>
          <T x={1118} y={y - 3} mid size={6}>{no}</T>
          <T x={1118} y={y + 4} mid size={6}>{depth}</T>
        </g>
      ))}
      {blows.map(([y, n, range]) => (
        <g key={y}>
          <T x={1150} y={y - 3} mid size={6}>{n}</T>
          <T x={1151} y={y + 4} mid size={6}>{range}</T>
        </g>
      ))}
      <T x={1243} y={486} size={6}>(1)13.50</T>
      <T x={1235} y={492} size={6}>2008.3.6</T>

      <T x={898} y={729}>勘察单位</T>
      <T x={935} y={729}>北京理正勘察设计院第六分院</T>
      <T x={1035} y={729}>校对</T>
      <T x={1080} y={729}>审核</T>
      <T x={1125} y={729}>日期</T>
      <T x={1200} y={729}>图号</T>
      <T x={1240} y={729} mid size={6}>32</T>
    </svg>
  );
};

/* ---------- floating windows ---------- */

const Palette = ({ tools, className }: { tools: string[]; className: string }) => (
  <div className={`absolute flex h-5 items-center border-y border-[#8d949e] bg-[#454c57] pl-[2px] ${className}`}>
    <span className="mr-px h-3.5 w-[5px] border-x border-dotted border-[#9aa3b0]" />
    {tools.map((t, i) => (
      <button key={i} aria-label={t} className="flex w-5 justify-center">
        <span className="bg-[#c3c3c3]">
          <Icon name={t} />
        </span>
      </button>
    ))}
    <button aria-label="关闭" className="h-full w-1.5 bg-[#333945]">
      <svg viewBox="0 0 6 18" className="h-full w-1.5">
        <path d="M1 1l4 5M5 1L1 6" stroke="#fff" strokeWidth="1.500" />
      </svg>
    </button>
  </div>
);

const ColumnWindow = () => (
  <section className="absolute top-[69px] -right-[33px] z-20 w-[119px] border-2 border-t-[#e8e6e0] border-r-[#6b6b6b] border-b-[#6b6b6b] border-l-[#e8e6e0] bg-[#c3c3c3] pb-1.5">
    <header className="flex h-[13px] items-center justify-between bg-linear-to-r from-[#808080] to-[#c0c0c0] pr-px pl-[2px]">
      <h2 className="text-[10px] leading-3 text-[#e4e4dc]">柱状图</h2>
      <button aria-label="关闭" className="flex size-[9px] items-center justify-center border border-[#555] bg-[#d4d0c8]">
        <svg viewBox="0 0 6 6" className="size-1.5">
          <path d="M0 0l6 6M6 0L0 6" stroke="#000" />
        </svg>
      </button>
    </header>
    <div className="mt-1 mr-1.5 ml-1">
      {["生成单钻孔柱状图", "生成场区综合柱状图", "生成试坑鉴定表"].map((s) => (
        <button
          key={s}
          className="block h-5 w-full border border-t-[#e8e8e8] border-r-[#555] border-b-[#444] border-l-[#e8e8e8] pl-2 text-left text-[10px] leading-[18px] whitespace-nowrap text-black"
        >
          {s}
        </button>
      ))}
    </div>
  </section>
);

const UcsIcon = () => (
  <svg viewBox="36 615 146 150" className="absolute bottom-[11px] left-[13px] h-[150px] w-[146px]" fill="none" stroke="#333">
    <path d="M36.500 744.500h18v17h-18zM45 744V652M54.500 753H146M38 672l7-20 8 20M127 745l19 8-19 7" />
    <path d="M38 616l7 9 8-9M45 625v12M164 742l16 21M180 742l-16 21" />
  </svg>
);

/* ---------- application shell ---------- */

const statusTools = [
  ["grid", ""],
  ["snap", ""],
  ["ortho", ""],
  ["polar", "border border-[#4a90c8] bg-[#47698c]"],
  ["osnap", ""],
  ["track", "border border-[#4a90c8] bg-[#47698c]"],
  ["ducs", "border border-[#4a90c8] bg-[#47698c]"],
  ["dyn", "border border-[#4a90c8] bg-[#47698c]"],
  ["lwt", ""],
  ["cycle", ""],
  ["quick", "border border-[#4a90c8] bg-[#47698c]"],
];

const TitleBar = () => (
  <header className="flex h-[15px] shrink-0 items-center border-b border-[#c9cdbf] bg-linear-to-r from-[#0a246a] via-[#4f74b0] via-55% to-[#a6caf0]">
    <svg viewBox="0 0 14 14" className="mr-[2px] size-[13px]">
      <rect width="14" height="14" rx="2" fill="#1672e8" />
      <path d="M2 3h6l-5 7h4M9 11V5l3 5" fill="none" stroke="#fff" strokeWidth="1.300" />
    </svg>
    <h1 className="text-[11px] leading-[14px] font-bold whitespace-pre text-white">
      工程地质勘察CAD9.0PB6(电力版)(AutoCAD)  -  [Drawing8.dwg]
    </h1>
    <div className="ml-auto flex h-full items-center">
      <button aria-label="最小化" className="flex h-3 w-[13px] items-end justify-center border border-t-white border-r-[#555] border-b-[#555] border-l-white bg-[#d4d0c8] pb-[1px]">
        <span className="h-[2px] w-[5px] bg-black" />
      </button>
      <button aria-label="还原" className="flex h-3 w-[13px] items-center justify-center border border-t-white border-r-[#555] border-b-[#555] border-l-white bg-[#d4d0c8]">
        <svg viewBox="0 0 8 8" className="size-2">
          <path d="M3 3V1h4v4H5M1 3h4v4H1z" fill="none" stroke="#000" />
        </svg>
      </button>
      <button aria-label="关闭" className="ml-[2px] h-3 w-1 border border-r-0 border-[#777] border-t-white border-l-white bg-[#d4d0c8]" />
    </div>
  </header>
);

const Toolbars = () => (
  <div className="shrink-0 bg-[#323844]">
    <div className="flex h-[22px] w-fit items-stretch bg-[#454c57] pr-[2px]">
      <span className="mr-[2px] w-[2px] bg-[#8b9bb0]" />
      {["newFile", "open", "save"].map((n) => <ToolButton key={n} name={n} />)}
      <Grip />
      {["print", "preview", "publish"].map((n) => <ToolButton key={n} name={n} />)}
      <Grip />
      {["cut", "copy", "paste", "brush"].map((n) => <ToolButton key={n} name={n} />)}
      <Grip />
      <div className="flex h-[19px] items-center self-center bg-[#222733]">
        <button aria-label="undo" className="px-[1px]"><Icon name="undo" /></button>
        <button aria-label="undo list" className="flex h-full w-2 items-center justify-center"><Down color="#fff" /></button>
        <button aria-label="redo" className="px-[1px]"><Icon name="redo" /></button>
        <button aria-label="redo list" className="flex h-full w-2 items-center justify-center"><Down color="#fff" /></button>
      </div>
      <Grip />
      {["hand", "zoomRt", "zoomWin", "zoomPrev"].map((n) => <ToolButton key={n} name={n} />)}
      <Grip />
      {["calc", "table", "props"].map((n) => <ToolButton key={n} name={n} />)}
      <Grip />
      <ToolButton name="help" />
      <span className="mr-[2px] ml-1 w-1.5 border-x-2 border-[#8b9bb0]" />
      <ToolButton name="textStyle" />
      <Combo label="文字样式" value="成果图表头" className="w-[82px]" />
      <Grip />
      <ToolButton name="dimStyle" />
      <Combo label="标注样式" value="ISO-25" className="w-[82px]" />
      <Grip />
      <ToolButton name="tableStyle" />
      <Combo label="表格样式" value="Standard" className="w-[82px]" />
      <Grip />
      <ToolButton name="leaderStyle" />
      <Combo label="引线样式" value="Standard" className="w-[82px]" />
    </div>
    <div className="flex h-6 w-fit items-stretch border-t border-[#8b9bb0] bg-[#454c57] pr-[3px]">
      <span className="mr-[2px] w-[2px] bg-[#8b9bb0]" />
      <ToolButton name="layers" />
      <Combo label="图层" value="0" className="w-[250px]">
        <Icon name="bulb" />
        <Icon name="sun" />
        <Icon name="viewport" />
        <Icon name="lock" />
        <span className="mx-[2px] size-2.5 shrink-0 bg-black" />
      </Combo>
      {["layerOn", "layerPrev", "layerState"].map((n) => <ToolButton key={n} name={n} />)}
      <Grip />
      <span className="w-1" />
      <Combo label="颜色" value="随层" className="w-[126px]">
        <span className="mx-[2px] size-2.5 shrink-0 bg-black" />
      </Combo>
      <Grip />
      <Combo label="线型" value="随层" className="w-[143px]">
        <span className="mx-[2px] h-px w-[52px] shrink-0 bg-[#e5e7eb]" />
      </Combo>
      <Grip />
      <Combo label="线宽" value="随层" className="w-[101px]">
        <span className="mx-[2px] h-px w-[31px] shrink-0 bg-[#e5e7eb]" />
      </Combo>
      <Grip />
      <Combo label="打印样式" value="随颜色" className="w-24" />
    </div>
  </div>
);

const Canvas = () => (
  <div className="relative min-h-0 flex-1 bg-white">
    <LogSheetA />
    <LogSheetB />
    <UcsIcon />
    <Palette className="top-[41px] left-[42px]" tools={["printer"]} />
    <Palette className="top-10 left-20" tools={["timer", "about"]} />
    <Palette
      className="top-[65px] left-[41px]"
      tools={["flag", "joinH", "joinHH", "flag", "flagCur", "docs", "one", "section", "column", "crop", "dropper"]}
    />
    <Palette
      className="top-[88px] left-[43px]"
      tools={["p1", "p2", "p3", "p4", "p5", "p6", "p7", "p8", "p9", "p10", "p11", "p12", "p13", "p14", "p15"]}
    />
    <div className="absolute top-1.5 right-2 flex gap-1.5">
      <button aria-label="最小化图形">
        <svg viewBox="0 0 10 10" className="size-2.5">
          <rect x=".5" y="5.500" width="9" height="3" rx="1" fill="#ddd" stroke="#444" />
        </svg>
      </button>
      <button aria-label="还原图形">
        <svg viewBox="0 0 10 10" className="size-2.5">
          <path d="M3 2V.5h6.500V7H8" fill="none" stroke="#444" />
          <rect x=".5" y="2.500" width="7" height="7" fill="#fff" stroke="#444" />
          <rect x="3" y="5" width="2" height="2" fill="#444" />
        </svg>
      </button>
      <button aria-label="关闭图形">
        <svg viewBox="0 0 10 10" className="size-2.5">
          <path d="M1 1l8 8M9 1L1 9" stroke="#444" strokeWidth="3" />
          <path d="M1 1l8 8M9 1L1 9" stroke="#fff" strokeWidth=".8" />
        </svg>
      </button>
    </div>
    <ColumnWindow />
  </div>
);

const CommandLine = () => (
  <div className="mt-1 mr-1.5 flex h-12 shrink-0 bg-[#2b2e32]">
    <button aria-label="关闭命令行" className="flex w-[19px] justify-center bg-[#434a57] pt-1">
      <svg viewBox="0 0 8 8" className="size-2">
        <path d="M0 0l8 8M8 0L0 8" stroke="#66707f" strokeWidth="1.300" />
      </svg>
    </button>
    <div className="flex flex-1 flex-col">
      <div className="flex h-[29px] justify-between border-b border-[#4b5058]">
        <p className="text-[13px] leading-[15px] whitespace-pre text-[#a9aeb8]">
          按<span className="font-['Liberation_Mono'] text-[11px]"> ESC </span>或
          <span className="font-['Liberation_Mono'] text-[11px]"> ENTER </span>键退出，或者单击鼠标右键显示快捷菜单。
        </p>
        <div className="flex w-3 flex-col items-center justify-around bg-[#434a57]">
          <svg viewBox="0 0 6 4" className="h-1 w-1.5"><path d="M0 4l3-3 3 3" fill="none" stroke="#8d95a3" /></svg>
          <span className="h-px w-full bg-[#6b7280]" />
          <svg viewBox="0 0 6 4" className="h-1 w-1.5"><path d="M0 0l3 3 3-3" fill="none" stroke="#8d95a3" /></svg>
        </div>
      </div>
      <input aria-label="命令" className="h-4 w-full border-l border-[#b9bec8] bg-transparent text-[13px] text-[#a9aeb8] outline-none" />
    </div>
  </div>
);

const FunctionPanel = () => (
  <aside className="flex w-[155px] shrink-0 flex-col bg-[#414955] pt-[2px]">
    <header className="flex h-[19px] items-center justify-between bg-[#4f5b67] pl-[15px]">
      <h2 className="text-[12px] leading-4 font-bold text-white">CAD功能面板</h2>
      <button aria-label="关闭面板">
        <svg viewBox="0 0 8 8" className="size-2">
          <path d="M1 1l6 6M7 1L1 7" stroke="#fff" strokeWidth="2" />
        </svg>
      </button>
    </header>
    <div className="mt-1 ml-1 flex-1 border-l border-[#7b8490] bg-[#efefef] text-[10px] text-black">
      <h3 className="h-5 border-b border-[#222] pl-1 leading-[18px]">【勘察CAD】</h3>
      <ul className="pt-[2px]">
        {panelItems.map(([label, branch]) => (
          <li key={label} className="h-[15px]">
            <button className="flex h-full w-full items-center pl-px text-left">
              <svg viewBox="0 0 5 9" className="mr-2.5 h-[9px] w-[5px]">
                {branch && <path d="M0 0l5 4.500L0 9z" fill="#000" />}
              </svg>
              {label}
            </button>
          </li>
        ))}
      </ul>
    </div>
  </aside>
);

const StatusBar = () => (
  <footer className="mt-px flex h-[17px] shrink-0 items-center bg-[#323844]">
    <span className="w-[215px] pt-[2px] pl-[7px] font-['Noto_Sans_CJK_SC'] text-[10px] leading-[15px] text-white">
      227.0219, 378.3486, 0.0000
    </span>
    {statusTools.map(([name, active]) => (
      <button key={name} aria-label={name} className="flex w-5 items-center justify-center">
        <span className={`flex h-[17px] w-4 items-center justify-center ${active}`}>
          <Icon name={name} />
        </span>
      </button>
    ))}
    <div className="ml-auto flex items-center">
      <Icon name="scale" />
      <button className="mr-2.5 flex items-center gap-[1px] pl-1 text-[10px] leading-4 text-[#a9aeb8]">
        1:1
        <Down color="#fff" />
      </button>
      {["scaleDot", "scaleAuto", "gear"].map((n) => (
        <button key={n} aria-label={n} className="flex w-[19px] justify-center">
          <Icon name={n} />
        </button>
      ))}
      <button aria-label="full" className="w-2.5 overflow-hidden">
        <Icon name="full" />
      </button>
    </div>
  </footer>
);

const App = () => {
  return (
    <div className="relative flex h-screen flex-col overflow-hidden bg-[#323844] font-['Liberation_Serif','Noto_Sans_CJK_SC',serif]">
      <TitleBar />
      <nav className="flex h-4 shrink-0 items-center border-b border-[#a9a9a9] bg-[#2f383e] pl-1">
        {menus.map(([label, width]) => (
          <button key={label} className={`text-left text-[10px] leading-[14px] whitespace-nowrap text-[#e8e8e8] ${width}`}>
            {label}
          </button>
        ))}
      </nav>
      <Toolbars />

      <div className="flex min-h-0 flex-1">
        <div className="flex min-w-0 flex-1 flex-col">
          <div className="flex min-h-0 flex-1">
            <div className="w-[23px] shrink-0">
              <div className="mt-[2px] flex w-[21px] flex-col bg-[#454c57] pb-1">
                <span className="mt-px mb-px h-1 border-y border-[#8b9bb0]" />
                {drawTools.map((n) => (
                  <button key={n} aria-label={n} className="flex h-[19px] items-center pl-[2px]">
                    <Icon name={n} />
                  </button>
                ))}
              </div>
            </div>

            <main className="flex min-w-0 flex-1 flex-col">
              <div className="flex h-[23px] shrink-0 items-stretch bg-[#2b2e32] pt-[1px]">
                <button aria-label="标签列表" className="flex w-[9px] items-center justify-center bg-[#454c57]">
                  <Down color="#fff" />
                </button>
                <div className="ml-px flex w-36 items-center bg-[#536682] pl-[3px]">
                  <svg viewBox="0 0 13 14" className="mr-[2px] h-3.5 w-[13px]">
                    <path d="M2 0h7l2 3v10H2z" fill="#f2f2f2" />
                    <rect y="5" width="13" height="6" rx="1" fill="#1769e8" />
                    <path d="M2 7v2h1V7zM5 7v2l1-1 1 1V7M11 7H9v2h2" fill="none" stroke="#fff" strokeWidth=".8" />
                  </svg>
                  <span className="flex-1 text-[11px] leading-4 font-bold text-white">Drawing8.dwg*</span>
                  <button aria-label="关闭标签" className="mr-[7px]">
                    <svg viewBox="0 0 8 8" className="size-2">
                      <path d="M1 1l6 6M7 1L1 7" stroke="#fff" strokeWidth="2" />
                    </svg>
                  </button>
                </div>
                <button aria-label="新建" className="ml-px flex w-[23px] items-center justify-center bg-[#3d434e]">
                  <Icon name="newFile" />
                </button>
              </div>
              <Canvas />
              <div className="flex h-3 shrink-0 items-stretch gap-px bg-[#2b2e32] text-[10px] leading-3 text-white">
                {["M1 6l3-3 3 3z", "M1 1v6M6 1L2 4l4 3z", "M6 1L2 4l4 3z", "M2 1l4 3-4 3z", "M2 1l4 3-4 3zM7 1v6"].map((d, i) => (
                  <button key={d} aria-label={`布局导航${i}`} className="flex w-[11px] items-center justify-center bg-[#3d434e]">
                    <svg viewBox="0 0 8 8" className="size-2">
                      <path d={d} fill={i ? "#9aa3b0" : "#fff"} stroke={i ? "#9aa3b0" : "#fff"} strokeWidth=".7" />
                    </svg>
                  </button>
                ))}
                <button className="ml-[2px] w-10 bg-[#536682] font-bold">模型</button>
                <button className="ml-px w-[43px] bg-[#3d434e]">布局1</button>
                <button className="ml-px w-[43px] bg-[#3d434e]">布局2</button>
                <button className="ml-px w-6 bg-[#3d434e] font-bold">+</button>
              </div>
            </main>

            <div className="flex w-[30px] shrink-0 flex-col border-l border-[#8b9bb0]">
              <div className="mt-px flex w-[22px] flex-col bg-[#454c57] pb-1">
                <span className="mb-[2px] h-[5px] border-y-2 border-[#8b9bb0]" />
                {modifyTools.map((n, i) => (
                  <button key={i} aria-label={n} className="flex h-[19px] items-center justify-center">
                    <Icon name={n} />
                  </button>
                ))}
                <span className="mt-[5px] mb-1 h-[5px] border-y-2 border-[#8b9bb0]" />
                {["front", "back", "above", "under"].map((n) => (
                  <button key={n} aria-label={n} className="flex h-[19px] items-center justify-center">
                    <Icon name={n} />
                  </button>
                ))}
              </div>
            </div>
          </div>
          <CommandLine />
        </div>
        <FunctionPanel />
      </div>

      <StatusBar />
      <span className="absolute top-[616px] -right-[26px] z-20 size-8 rounded-full border-2 border-[#e5e5e5] bg-[#2e9e52] shadow-md ring-1 ring-[#888]" />
    </div>
  );
};

export default App;
